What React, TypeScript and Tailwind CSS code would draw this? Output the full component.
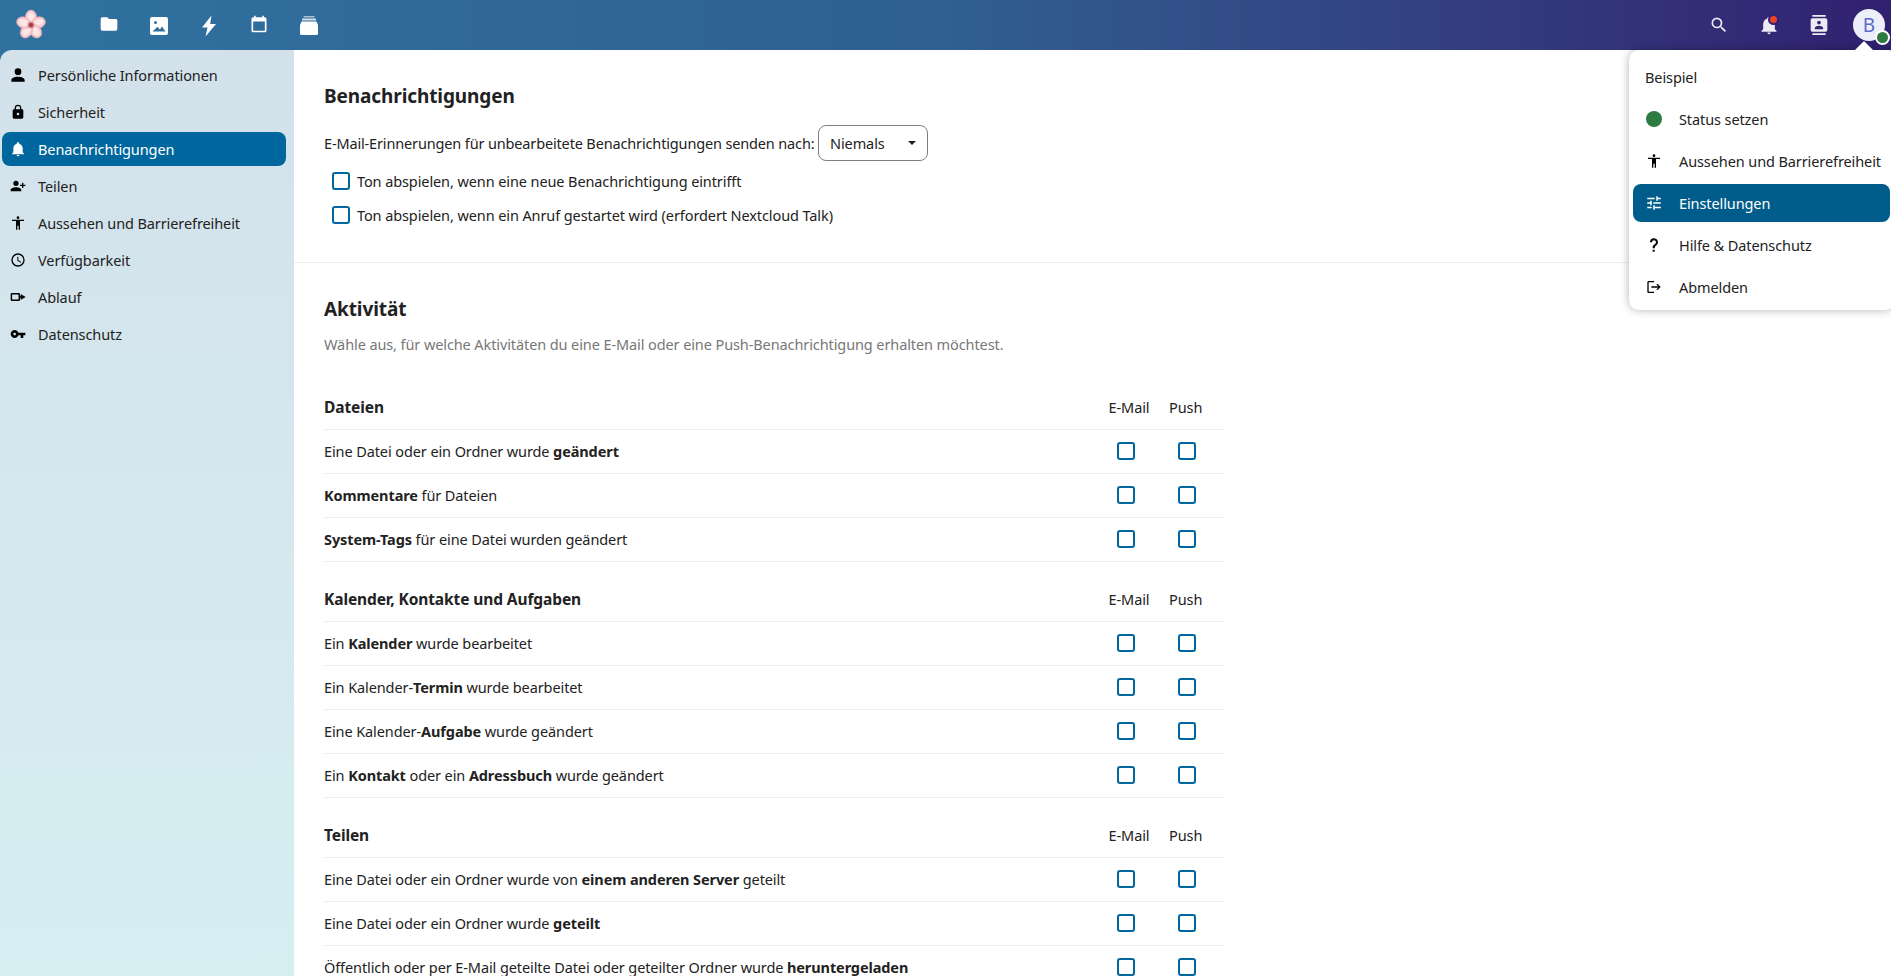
import type { ReactNode } from "react";

const Mdi = ({ d, size = 16 }: { d: string; size?: number }) => (
  <svg width={size} height={size} viewBox="0 0 24 24" fill="currentColor" className="shrink-0">
    <path d={d} />
  </svg>
);

const icons = {
  account: "M12,4A4,4 0 0,1 16,8A4,4 0 0,1 12,12A4,4 0 0,1 8,8A4,4 0 0,1 12,4M12,14C16.42,14 20,15.79 20,18V20H4V18C4,15.79 7.58,14 12,14Z",
  lock: "M12,17A2,2 0 0,0 14,15C14,13.89 13.1,13 12,13A2,2 0 0,0 10,15A2,2 0 0,0 12,17M18,8A2,2 0 0,1 20,10V20A2,2 0 0,1 18,22H6A2,2 0 0,1 4,20V10C4,8.89 4.9,8 6,8H7V6A5,5 0 0,1 12,1A5,5 0 0,1 17,6V8H18M12,3A3,3 0 0,0 9,6V8H15V6A3,3 0 0,0 12,3Z",
  bell: "M21,19V20H3V19L5,17V11C5,7.9 7.03,5.17 10,4.29C10,4.19 10,4.1 10,4A2,2 0 0,1 12,2A2,2 0 0,1 14,4C14,4.1 14,4.19 14,4.29C16.97,5.17 19,7.9 19,11V17L21,19M14,21A2,2 0 0,1 12,23A2,2 0 0,1 10,21",
  share: "M9,14C6.33,14 1,15.33 1,18V20H17V18C17,15.33 11.67,14 9,14M18,10V7H20V10H23V12H20V15H18V12H15V10M9,12A4,4 0 0,0 13,8A4,4 0 0,0 9,4A4,4 0 0,0 5,8A4,4 0 0,0 9,12Z",
  human: "M21 9H15V22H13V16H11V22H9V9H3V7H21M12 2A2 2 0 0 1 14 4A2 2 0 0 1 12 6C10.9 6 10 5.1 10 4C10 2.89 10.9 2 12 2Z",
  clock: "M12,20A8,8 0 0,0 20,12A8,8 0 0,0 12,4A8,8 0 0,0 4,12A8,8 0 0,0 12,20M12,2A10,10 0 0,1 22,12A10,10 0 0,1 12,22C6.47,22 2,17.5 2,12A10,10 0 0,1 12,2M12.5,7V12.25L17,14.92L16.25,16.15L11,13V7H12.5Z",
  flow: "M3 6H13A2 2 0 0 1 15 8V16A2 2 0 0 1 13 18H3A2 2 0 0 1 1 16V8A2 2 0 0 1 3 6M3.2 8.2V15.8H12.8V8.2H3.2M16 11V7.5L23.5 12L16 16.5V13H14V11H16Z",
  key: "M7 14C5.9 14 5 13.1 5 12S5.9 10 7 10 9 10.9 9 12 8.1 14 7 14M12.6 10C11.8 7.7 9.6 6 7 6C3.7 6 1 8.7 1 12S3.7 18 7 18C9.6 18 11.8 16.3 12.6 14H16V18H20V14H23V10H12.6Z",
  logout: "M17 7L15.59 8.41L18.17 11H8V13H18.17L15.59 15.58L17 17L22 12L17 7M4 5H12V3H4C2.9 3 2 3.9 2 5V19C2 20.1 2.9 21 4 21H12V19H4V5Z",
  tune: "M3,17V19H9V17H3M3,5V7H13V5H3M13,21V19H21V17H13V15H11V21H13M7,9V11H3V13H7V15H9V9H7M21,13V11H11V13H21M15,9H17V7H21V5H17V3H15V9Z",
  help: "M10,19H13V22H10V19M12,2C17.35,2.22 19.68,7.62 16.5,11.67C15.67,12.67 14.33,13.33 13.67,14.17C13,15 13,16 13,17H10C10,15.33 10,13.92 10.67,12.92C11.33,11.92 12.67,11.33 13.5,10.67C15.92,8.43 15.32,5.26 12,5A3,3 0 0,0 9,8H6A6,6 0 0,1 12,2Z",
  folder: "M10,4H4C2.89,4 2,4.89 2,6V18A2,2 0 0,0 4,20H20A2,2 0 0,0 22,18V8C22,6.89 21.1,6 20,6H12L10,4Z",
  calendar: "M19 4h-1V2h-2v2H8V2H6v2H5a2 2 0 0 0-2 2v14a2 2 0 0 0 2 2h14a2 2 0 0 0 2-2V6a2 2 0 0 0-2-2zm0 16H5V9h14v11z",
  magnify: "M9.5,3A6.5,6.5 0 0,1 16,9.5C16,11.11 15.41,12.59 14.44,13.73L14.71,14H15.5L20.5,19L19,20.5L14,15.5V14.71L13.73,14.44C12.59,15.41 11.11,16 9.5,16A6.5,6.5 0 0,1 3,9.5A6.5,6.5 0 0,1 9.5,3M9.5,5C7,5 5,7 5,9.5C5,12 7,14 9.5,14C12,14 14,12 14,9.5C14,7 12,5 9.5,5Z",
  contacts: "M20,0H4V2H20V0M4,24H20V22H4V24M20,4H4A2,2 0 0,0 2,6V18A2,2 0 0,0 4,20H20A2,2 0 0,0 22,18V6A2,2 0 0,0 20,4M12,6.75A2.25,2.25 0 0,1 14.25,9A2.25,2.25 0 0,1 12,11.25A2.25,2.25 0 0,1 9.75,9A2.25,2.25 0 0,1 12,6.75M17,17H7V15.5C7,13.83 10.33,13 12,13C13.67,13 17,13.83 17,15.5V17Z",
};

const Logo = () => (
  <svg width="32" height="32" viewBox="0 0 32 32">
    {[0, 72, 144, 216, 288].map((r) => (
      <g key={r} transform={`rotate(${r} 16 16)`}>
        <ellipse cx="16" cy="8.3" rx="5.6" ry="7.2" fill="#f6c6cb" stroke="#eeaab2" strokeWidth="0.6" />
        <ellipse cx="16" cy="8.3" rx="3.4" ry="5.4" fill="#fde6e6" />
      </g>
    ))}
    <circle cx="16" cy="16" r="3.6" fill="#d98a8f" />
    <circle cx="16" cy="16" r="2" fill="#9c3a44" />
  </svg>
);

const ImageIcon = () => (
  <svg width="24" height="24" viewBox="0 0 24 24" fill="currentColor">
    <path
      fillRule="evenodd"
      d="M5 3H19A2 2 0 0 1 21 5V19A2 2 0 0 1 19 21H5A2 2 0 0 1 3 19V5A2 2 0 0 1 5 3ZM8.5 7A1.5 1.5 0 1 0 8.5 10A1.5 1.5 0 1 0 8.5 7ZM5.5 17.5H18.5L15 12.5L12.8 15.4L10.5 12.8Z"
    />
  </svg>
);

const BoltIcon = () => (
  <svg width="24" height="24" viewBox="0 0 24 24" fill="currentColor">
    <path d="M14.5 1.5L5 13.5H10.5L8.5 22.5L19 10H13.2Z" />
  </svg>
);

const DeckIcon = () => (
  <svg width="24" height="24" viewBox="0 0 24 24" fill="currentColor">
    <rect x="6.5" y="2" width="11" height="1.5" rx="0.5" opacity="0.6" />
    <rect x="5" y="4.5" width="14" height="2" rx="0.5" opacity="0.8" />
    <path d="M4.5 7.5H19.5L21 11V19.5A1.5 1.5 0 0 1 19.5 21H4.5A1.5 1.5 0 0 1 3 19.5V11Z" />
  </svg>
);

const Box = () => <span className="block h-[18px] w-[18px] shrink-0 rounded-[3px] border-2 border-[#00679e]" />;

const sideItems = [
  { icon: icons.account, size: 20, label: "Persönliche Informationen" },
  { icon: icons.lock, label: "Sicherheit" },
  { icon: icons.bell, label: "Benachrichtigungen", active: true },
  { icon: icons.share, label: "Teilen" },
  { icon: icons.human, label: "Aussehen und Barrierefreiheit" },
  { icon: icons.clock, label: "Verfügbarkeit" },
  { icon: icons.flow, label: "Ablauf" },
  { icon: icons.key, label: "Datenschutz" },
];

const groups: { title: string; rows: ReactNode[] }[] = [
  {
    title: "Dateien",
    rows: [
      <>Eine Datei oder ein Ordner wurde <b>geändert</b></>,
      <><b>Kommentare</b> für Dateien</>,
      <><b>System-Tags</b> für eine Datei wurden geändert</>,
    ],
  },
  {
    title: "Kalender, Kontakte und Aufgaben",
    rows: [
      <>Ein <b>Kalender</b> wurde bearbeitet</>,
      <>Ein Kalender-<b>Termin</b> wurde bearbeitet</>,
      <>Eine Kalender-<b>Aufgabe</b> wurde geändert</>,
      <>Ein <b>Kontakt</b> oder ein <b>Adressbuch</b> wurde geändert</>,
    ],
  },
  {
    title: "Teilen",
    rows: [
      <>Eine Datei oder ein Ordner wurde von <b>einem anderen Server</b> geteilt</>,
      <>Eine Datei oder ein Ordner wurde <b>geteilt</b></>,
      <>Öffentlich oder per E-Mail geteilte Datei oder geteilter Ordner wurde <b>heruntergeladen</b></>,
    ],
  },
];

const menuItems = [
  { icon: icons.human, size: 16, label: "Aussehen und Barrierefreiheit" },
  { icon: icons.tune, size: 18, label: "Einstellungen", active: true },
  { icon: icons.help, size: 16, label: "Hilfe & Datenschutz" },
  { icon: icons.logout, size: 16, label: "Abmelden" },
];

export default function App() {
  return (
    <div className="relative flex h-[976px] w-full flex-col overflow-hidden bg-gradient-to-r from-[#2f729f] via-[#2f5f93] to-[#31206f] font-['Noto_Sans',sans-serif] text-[14.5px] tracking-[-0.1px] text-[#222]">
      <header className="flex h-[50px] shrink-0 items-center text-white">
        <div className="flex w-[84px] justify-center pr-[22px]">
          <Logo />
        </div>
        <nav className="mt-[2px] flex">
          <div className="flex w-[50px] justify-center"><Mdi d={icons.folder} size={20} /></div>
          <div className="flex w-[50px] justify-center"><ImageIcon /></div>
          <div className="flex w-[50px] justify-center"><BoltIcon /></div>
          <div className="flex w-[50px] justify-center"><Mdi d={icons.calendar} size={20} /></div>
          <div className="flex w-[50px] justify-center"><DeckIcon /></div>
        </nav>
        <div className="ml-auto flex items-center text-[#ecebf3]">
          <div className="flex w-[50px] justify-center"><Mdi d={icons.magnify} size={20} /></div>
          <div className="relative flex w-[50px] justify-center">
            <Mdi d={icons.bell} size={20} />
            <span className="absolute left-[26px] top-[1px] h-[7px] w-[7px] rounded-full bg-[#e9441f] ring-2 ring-[#32217a]" />
          </div>
          <div className="flex w-[50px] justify-center"><Mdi d={icons.contacts} size={20} /></div>
          <div className="relative ml-[3px] flex w-[44px] justify-center">
            <div className="flex h-[32px] w-[32px] items-center justify-center rounded-full bg-[#eceefa] text-[19px] text-[#5a6bc8]">B</div>
            <span className="absolute left-[28px] top-[21px] h-[15px] w-[15px] rounded-full border-2 border-white bg-[#2d7b41]" />
          </div>
        </div>
      </header>

      <div className="flex min-h-0 flex-1">
        <aside className="w-[294px] shrink-0 rounded-tl-[12px] bg-gradient-to-b from-[#d3e1ea] to-[#d6eff3] pt-[8px]">
          <ul className="flex flex-col gap-[3px]">
            {sideItems.map((item) => (
              <li
                key={item.label}
                className={
                  "mx-[2px] flex h-[34px] w-[284px] items-center gap-[10px] rounded-[8px] pl-[6px] " +
                  (item.active ? "bg-[#00679e] text-white" : "text-[#222]")
                }
              >
                <span className={"flex w-[20px] justify-center " + (item.active ? "text-white" : "text-black")}>
                  <Mdi d={item.icon} size={item.size} />
                </span>
                <span className="pt-[2px]">{item.label}</span>
              </li>
            ))}
          </ul>
        </aside>

        <main className="min-w-0 flex-1 bg-white">
          <section className="h-[213px] border-b border-[#ededed] pl-[30px] pt-[31px]">
            <h2 className="text-[19px] font-bold leading-[30px] text-[#222]">Benachrichtigungen</h2>
            <div className="mt-[14px] flex h-[36px] items-center">
              <span className="w-[490px] whitespace-nowrap pt-[2px] tracking-[-0.15px]">E-Mail-Erinnerungen für unbearbeitete Benachrichtigungen senden nach:</span>
              <div className="ml-[4px] flex h-[36px] w-[110px] items-center justify-between rounded-[8px] border border-[#7f7f7f] pl-[11px] pr-[11px]">
                <span className="pt-[2px]">Niemals</span>
                <span className="h-0 w-0 border-x-[4px] border-t-[4px] border-x-transparent border-t-[#222]" />
              </div>
            </div>
            <div className="mt-[3px] flex h-[34px] items-center gap-[7px] pl-[8px]">
              <Box />
              <span className="pt-[2px]">Ton abspielen, wenn eine neue Benachrichtigung eintrifft</span>
            </div>
            <div className="flex h-[34px] items-center gap-[7px] pl-[8px]">
              <Box />
              <span className="pt-[2px]">Ton abspielen, wenn ein Anruf gestartet wird (erfordert Nextcloud Talk)</span>
            </div>
          </section>

          <section className="pl-[30px] pt-[31px]">
            <h2 className="text-[19px] font-bold leading-[30px] text-[#222]">Aktivität</h2>
            <p className="mt-[9px] leading-[22px] text-[#777]">
              Wähle aus, für welche Aktivitäten du eine E-Mail oder eine Push-Benachrichtigung erhalten möchtest.
            </p>
            <div className="mt-[15px] w-[900px]">
              {groups.map((group) => (
                <div key={group.title}>
                  <div className="flex h-[60px] items-center border-b border-[#ededed] pr-[23px] pt-[16px]">
                    <span className="flex-1 text-[15.5px] font-bold">{group.title}</span>
                    <span className="w-[42px] text-center">E-Mail</span>
                    <span className="ml-[19px] w-[32px] text-center">Push</span>
                  </div>
                  {group.rows.map((row, i) => (
                    <div key={i} className="flex h-[44px] items-center border-b border-[#ededed] pr-[28px]">
                      <span className="flex-1">{row}</span>
                      <div className="mb-[2px] flex gap-[43px]">
                        <Box />
                        <Box />
                      </div>
                    </div>
                  ))}
                </div>
              ))}
            </div>
          </section>
        </main>
      </div>

      <div className="absolute right-[-4px] top-[50px] h-[260px] w-[266px] rounded-[10px] bg-white pb-[3px] pl-[4px] pr-[5px] pt-[8px] shadow-[0_0_10px_rgba(0,0,0,0.3)]">
        <span className="absolute right-[22px] top-[-9px] h-0 w-0 border-x-[9px] border-b-[9px] border-x-transparent border-b-white" />
        <div className="flex h-[38px] items-center pl-[12px] pt-[2px]">Beispiel</div>
        <div className="mt-[4px] flex h-[38px] items-center pl-[11px]">
          <span className="mx-[2px] h-[16px] w-[16px] rounded-full bg-[#2d7b41]" />
          <span className="ml-[15px] pt-[2px]">Status setzen</span>
        </div>
        {menuItems.map((item) => (
          <div
            key={item.label}
            className={
              "mt-[4px] flex h-[38px] items-center gap-[15px] whitespace-nowrap rounded-[8px] pl-[11px] " +
              (item.active ? "bg-[#005c8a] text-white" : "")
            }
          >
            <span className={"flex w-[20px] justify-center " + (item.active ? "text-white" : "text-black")}>
              <Mdi d={item.icon} size={item.size} />
            </span>
            <span className="pt-[2px]">{item.label}</span>
          </div>
        ))}
      </div>
    </div>
  );
}
